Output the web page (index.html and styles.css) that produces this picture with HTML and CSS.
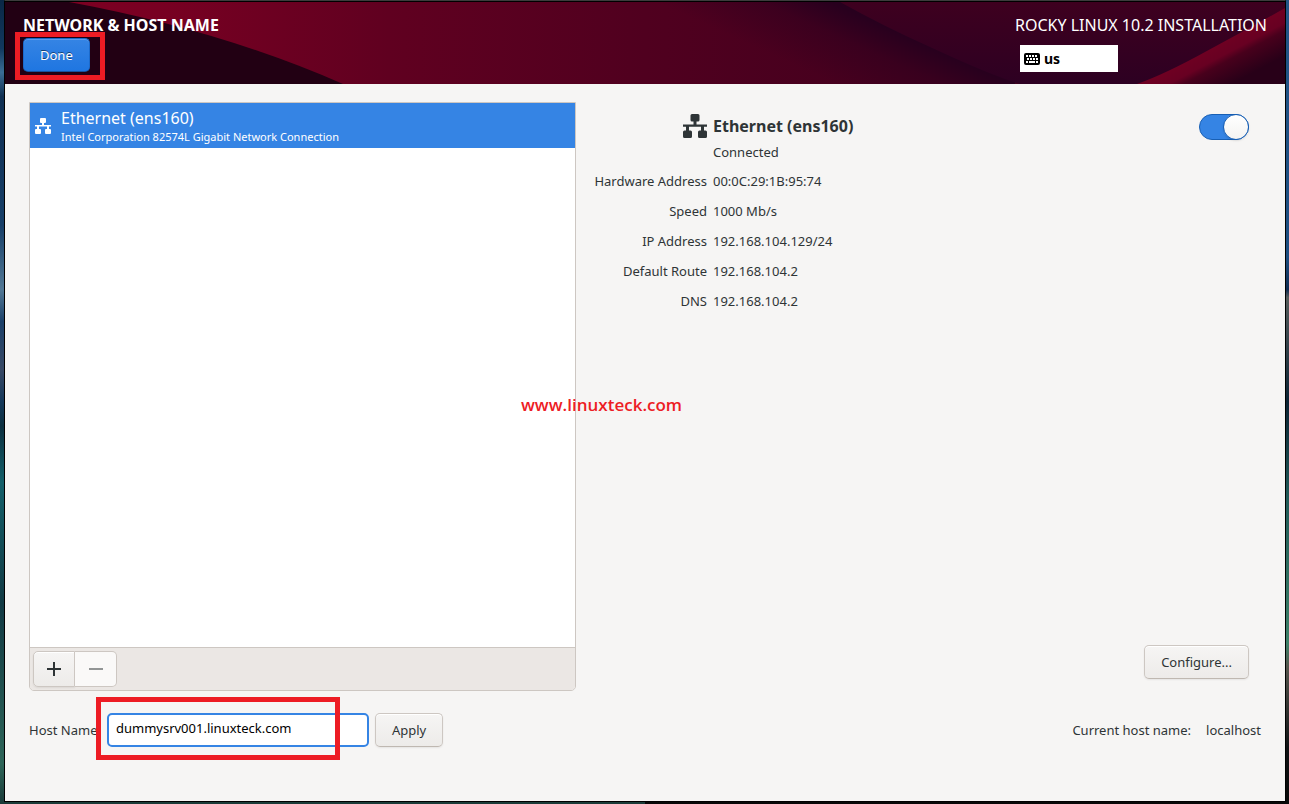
FILE: index.html
```html
<!DOCTYPE html>
<html lang="en">
<head>
    <meta charset="UTF-8">
    <meta name="viewport" content="width=device-width, initial-scale=1.0">
    <title>Network &amp; Host Name</title>
    <link rel="stylesheet" href="styles.css">
</head>
<body>
<svg class="sprite" aria-hidden="true">
    <symbol id="icon-wired" viewBox="0 0 16 16">
        <path d="M6 0h4a1 1 0 0 1 1 1v3a1 1 0 0 1-1 1H9v2h7v1.500h-2V11h1a1 1 0 0 1 1 1v3a1 1 0 0 1-1 1h-4a1 1 0 0 1-1-1v-3a1 1 0 0 1 1-1h1V8.500H4V11h1a1 1 0 0 1 1 1v3a1 1 0 0 1-1 1H1a1 1 0 0 1-1-1v-3a1 1 0 0 1 1-1h1V8.500H0V7h7V5H6a1 1 0 0 1-1-1V1a1 1 0 0 1 1-1z"/>
    </symbol>
</svg>

<div class="window">
    <header class="header">
        <svg class="header-art" viewBox="0 0 1280 82" preserveAspectRatio="none" aria-hidden="true">
            <defs>
                <linearGradient id="base" x1="0" y1="0" x2="1" y2="0">
                    <stop offset="0" stop-color="#800022"/>
                    <stop offset="0.12" stop-color="#780022"/>
                    <stop offset="0.3" stop-color="#600020"/>
                    <stop offset="0.5" stop-color="#50001f"/>
                    <stop offset="0.7" stop-color="#44001e"/>
                    <stop offset="1" stop-color="#3a001e"/>
                </linearGradient>
                <linearGradient id="shade" gradientUnits="userSpaceOnUse" x1="910" y1="38" x2="880" y2="104">
                    <stop offset="0" stop-color="#28001e"/>
                    <stop offset="0.4" stop-color="#28001e" stop-opacity="0.4"/>
                    <stop offset="1" stop-color="#28001e" stop-opacity="0"/>
                </linearGradient>
                <linearGradient id="fold" x1="0" y1="0" x2="0" y2="1">
                    <stop offset="0" stop-color="#3e001f"/>
                    <stop offset="1" stop-color="#2d0022"/>
                </linearGradient>
                <linearGradient id="ribbon" gradientUnits="userSpaceOnUse" x1="1200" y1="50" x2="1219" y2="86">
                    <stop offset="0" stop-color="#6e0022"/>
                    <stop offset="0.28" stop-color="#680022"/>
                    <stop offset="0.45" stop-color="#48001c"/>
                    <stop offset="1" stop-color="#280018"/>
                </linearGradient>
            </defs>
            <rect width="1280" height="82" fill="url(#base)"/>
            <path d="M0 0H64Q215 28 338 82H0z" fill="#220013"/>
            <rect x="500" width="510" height="82" fill="url(#shade)"/>
            <path d="M835 0Q880 25 925 45Q985 73 1015 82H1280V0z" fill="url(#fold)"/>
            <path d="M1132 82Q1160 72 1200 50Q1245 26 1280 6V82z" fill="url(#ribbon)"/>
        </svg>
        <div class="header-left">
            <h1 class="header-title">NETWORK &amp; HOST NAME</h1>
            <div class="marked marked-done">
                <button class="btn btn-primary" type="button">Done</button>
            </div>
        </div>
        <div class="header-right">
            <div class="product">ROCKY LINUX 10.2 INSTALLATION</div>
            <button class="keyboard" type="button">
                <svg class="icon-keyboard" viewBox="0 0 16 12" aria-hidden="true">
                    <rect width="16" height="12" rx="2"/>
                    <path d="M2 2h2v2H2zM5 2h2v2H5zM8 2h2v2H8zM11 2h2v2h-2zM3 5h2v2H3zM6 5h2v2H6zM9 5h2v2H9zM12 5h2v2h-2zM2 8h2v2H2zM5 8h6v2H5zM12 8h2v2h-2z" fill="#fff"/>
                </svg>
                us
            </button>
        </div>
    </header>

    <main class="main">
        <div class="columns">
            <section class="devices">
                <ul class="device-list">
                    <li class="device">
                        <svg class="icon-small"><use href="#icon-wired"/></svg>
                        <div>
                            <div class="device-name">Ethernet (ens160)</div>
                            <div class="device-info">Intel Corporation 82574L Gigabit Network Connection</div>
                        </div>
                    </li>
                </ul>
                <div class="toolbar">
                    <button class="tool" type="button" aria-label="Add">
                        <svg class="icon-small" viewBox="0 0 16 16"><path d="M7 1h2v6h6v2H9v6H7V9H1V7h6z"/></svg>
                    </button>
                    <button class="tool" type="button" aria-label="Remove" disabled>
                        <svg class="icon-small" viewBox="0 0 16 16"><path d="M1 7h14v2H1z"/></svg>
                    </button>
                </div>
            </section>

            <section class="details">
                <div class="details-head">
                    <svg class="icon-large"><use href="#icon-wired"/></svg>
                    <div class="details-title">
                        <h2>Ethernet (ens160)</h2>
                        <p>Connected</p>
                    </div>
                    <input class="switch" type="checkbox" role="switch" aria-label="Ethernet (ens160)" checked>
                </div>
                <dl class="facts">
                    <dt>Hardware Address</dt><dd>00:0C:29:1B:95:74</dd>
                    <dt>Speed</dt><dd>1000 Mb/s</dd>
                    <dt>IP Address</dt><dd>192.168.104.129/24</dd>
                    <dt>Default Route</dt><dd>192.168.104.2</dd>
                    <dt>DNS</dt><dd>192.168.104.2</dd>
                </dl>
                <button class="btn btn-configure" type="button">Configure...</button>
            </section>
        </div>

        <form class="host">
            <label for="hostname">Host Name:</label>
            <div class="marked marked-host">
                <input class="host-input" id="hostname" type="text" value="dummysrv001.linuxteck.com">
            </div>
            <button class="btn" type="button">Apply</button>
            <div class="current">
                <span>Current host name:</span>
                <span>localhost</span>
            </div>
        </form>
    </main>
    <div class="watermark">www.linuxteck.com</div>
</div>
</body>
</html>
```

FILE: styles.css
```css
* {
    margin: 0;
    padding: 0;
    box-sizing: border-box;
}

body {
    height: 100vh;
    padding: 0 3px 2px 4px;
    font: 13px/20px 'Noto Sans', sans-serif;
    color: #2e3436;
    background:
        linear-gradient(#225588 0, #1c4d80 32%, #0e2b50 36%, #555c5c 37%, #0b2233 50%, #205a58 62%, #3c8068 80%, #55554d 83%, #101214 93%, #080808 100%) right / 50% 100% no-repeat,
        linear-gradient(#0a2745 0, #11385e 6%, #3a6d95 9%, #102f52 12%, #173f68 28%, #527895 36%, #1b4069 40%, #384965 46%, #14385a 50%, #0c3040 53%, #14606a 60%, #123a44 75%, #2e6558 95%, #1a3a38 100%);
}

.sprite {
    position: absolute;
    width: 0;
    height: 0;
}

svg {
    display: block;
    flex: none;
    fill: currentColor;
}

button,
input {
    font: inherit;
    color: inherit;
}

.window {
    position: relative;
    height: 100%;
    display: flex;
    flex-direction: column;
    border: 1px solid #000;
    border-top-color: #3c3c3c;
    background: #f6f5f4;
}

/* Header */
.header {
    position: relative;
    display: flex;
    justify-content: space-between;
    height: 83px;
    padding: 13px 18px 0;
    border-top: 1px solid #000;
    color: #fff;
}

.header-art {
    position: absolute;
    inset: 0;
    width: 100%;
    height: 100%;
}

.header-left,
.header-right {
    position: relative;
    display: flex;
    flex-direction: column;
    align-items: flex-start;
}

.header-left {
    gap: 3px;
}

.header-right {
    gap: 10px;
    width: 247px;
}

.header-title {
    font-size: 16px;
    line-height: 20px;
    font-weight: 700;
}

.product {
    align-self: flex-end;
    font-size: 16px;
    white-space: nowrap;
}

.keyboard {
    display: flex;
    align-items: center;
    gap: 4px;
    width: 98px;
    height: 27px;
    padding: 0 4px;
    border: 0;
    background: #fff;
    color: #000;
    font-size: 14px;
    font-weight: 700;
}

.icon-keyboard {
    width: 16px;
    height: 12px;
}

/* Buttons */
.btn {
    height: 34px;
    padding: 0 16px 1px;
    border: 1px solid #cdc7c2;
    border-bottom-color: #bfb8b1;
    border-radius: 5px;
    background: linear-gradient(#f6f5f4, #edebe9);
    box-shadow: inset 0 1px #fff, 0 1px 2px rgba(0, 0, 0, 0.07);
}

.btn-primary {
    display: block;
    border-color: #1b6acb;
    border-bottom-color: #15539e;
    background: linear-gradient(#3584e4, #1f76e1);
    box-shadow: inset 0 1px rgba(255, 255, 255, 0.2);
    color: #fff;
    text-shadow: 0 -1px rgba(0, 0, 0, 0.5);
}

/* Red highlight frames */
.marked {
    position: relative;
}

.marked::after {
    content: "";
    position: absolute;
    border: 5px solid #ed1c24;
    pointer-events: none;
}

.marked-done::after {
    inset: -6px -15px -8px -8px;
    box-sizing: border-box;
}

.marked-host::after {
    inset: -16px 29px -13px -11px;
}

/* Body */
.main {
    flex: 1;
    display: flex;
    flex-direction: column;
    gap: 22px;
    padding: 18px 24px 54px;
}

.columns {
    flex: 1;
    display: flex;
    gap: 18px;
}

.devices {
    flex: 0 0 547px;
    display: flex;
    flex-direction: column;
    border: 1px solid #cdc7c2;
    border-radius: 0 0 5px 5px;
    overflow: hidden;
}

.device-list {
    flex: 1;
    list-style: none;
    background: #fff;
}

.device {
    display: flex;
    align-items: center;
    gap: 10px;
    height: 45px;
    padding: 0 5px;
    background: #3584e4;
    color: #fff;
}

.device-name {
    font-size: 16px;
    line-height: 22px;
}

.device-info {
    font-size: 11px;
    line-height: 16px;
}

.icon-small {
    width: 16px;
    height: 16px;
}

.icon-large {
    width: 24px;
    height: 24px;
}

.toolbar {
    display: flex;
    padding: 3px;
    border-top: 1px solid #cdc7c2;
    background: #ebe7e4;
}

.tool {
    display: flex;
    align-items: center;
    justify-content: center;
    width: 42px;
    height: 36px;
    border: 1px solid #cdc7c2;
    border-radius: 5px 0 0 5px;
    background: linear-gradient(#f6f5f4, #edebe9);
    box-shadow: inset 0 1px #fff, 0 1px 2px rgba(0, 0, 0, 0.07);
}

.tool:disabled {
    border-left: 0;
    border-radius: 0 5px 5px 0;
    background: #faf9f8;
    box-shadow: none;
    color: #929595;
}

/* Device details */
.details {
    flex: 1;
    display: flex;
    flex-direction: column;
    padding: 12px 12px 12px 0;
}

.details-head {
    display: flex;
    align-items: flex-start;
    gap: 6px;
    padding-left: 89px;
}

.details-title {
    flex: 1;
}

.details-title h2 {
    margin-bottom: 4px;
    font-size: 16px;
    line-height: 24px;
}

.switch {
    appearance: none;
    display: flex;
    justify-content: flex-end;
    width: 50px;
    height: 26px;
    border: 1px solid #185fb4;
    border-radius: 13px;
    background: #3584e4;
}

.switch::before {
    content: "";
    width: 24px;
    margin: -1px;
    border: 1px solid #185fb4;
    border-radius: 50%;
    background: linear-gradient(#fff, #f4f3f2);
    box-shadow: 0 1px 2px rgba(0, 0, 0, 0.1);
}

.switch:not(:checked) {
    justify-content: flex-start;
    background: #deddda;
}

.facts {
    display: grid;
    grid-template-columns: 113px 1fr;
    column-gap: 6px;
    row-gap: 10px;
    padding-top: 9px;
}

.facts dt {
    text-align: right;
    white-space: nowrap;
}

.btn-configure {
    align-self: flex-end;
    margin-top: auto;
}

/* Host name row */
.host {
    display: flex;
    align-items: center;
    gap: 6px;
}

.host-input {
    display: block;
    width: 262px;
    height: 34px;
    padding: 0 7px 4px;
    border: 2px solid #3584e4;
    border-radius: 5px;
    outline: 0;
    background: #fff;
    color: #000;
}

.current {
    display: flex;
    gap: 15px;
    margin-left: auto;
}

.watermark {
    position: absolute;
    top: 49%;
    left: 516px;
    font: 600 17px/24px 'Open Sans', sans-serif;
    color: #ed1c24;
}
```
